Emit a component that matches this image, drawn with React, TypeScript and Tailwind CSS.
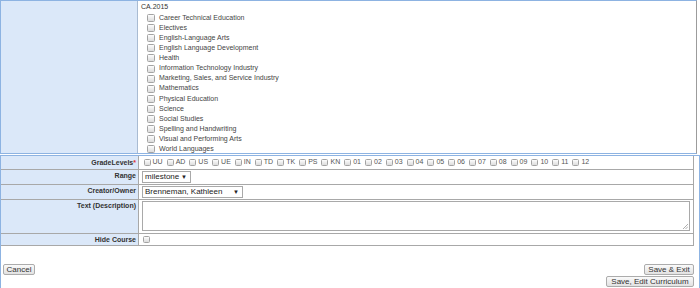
import React from "react";

const subjects = [
  "Career Technical Education",
  "Electives",
  "English-Language Arts",
  "English Language Development",
  "Health",
  "Information Technology Industry",
  "Marketing, Sales, and Service Industry",
  "Mathematics",
  "Physical Education",
  "Science",
  "Social Studies",
  "Spelling and Handwriting",
  "Visual and Performing Arts",
  "World Languages",
];

const grades = [
  "UU", "AD", "US", "UE", "IN", "TD", "TK", "PS", "KN",
  "01", "02", "03", "04", "05", "06", "07", "08", "09", "10", "11", "12",
];

function Check({ size = "w-[8px] h-[8px]" }: { size?: string }) {
  return (
    <span
      className={`inline-block shrink-0 ${size} rounded-[1.5px] border border-[#a3a3a3] bg-gradient-to-b from-[#fdfdfd] to-[#dcdcdc]`}
    />
  );
}

function Select({ value, width }: { value: string; width: string }) {
  return (
    <div
      className={`flex h-[12px] ${width} items-center justify-between border border-[#a9a9a9] bg-white pl-[2px] pr-[3px] text-[8px] leading-none text-[#222]`}
    >
      <span>{value}</span>
      <span className="text-[6px]">▼</span>
    </div>
  );
}

function Btn({ label, width }: { label: string; width: string }) {
  return (
    <div
      className={`flex h-[11px] ${width} items-center justify-center rounded-[2px] border border-[#acacac] bg-gradient-to-b from-[#fafafa] to-[#e2e2e2] text-[8px] leading-none text-[#333]`}
    >
      {label}
    </div>
  );
}

function Row({
  label,
  children,
  height,
  required,
  top,
}: {
  label: string;
  children: React.ReactNode;
  height: string;
  required?: boolean;
  top?: boolean;
}) {
  return (
    <div className={`flex ${height} border-b border-[#a8a8a8]`}>
      <div
        className={`flex w-[138px] shrink-0 justify-end border-r border-[#a8a8a8] bg-[#dbe8f9] pr-[2px] font-bold leading-[10px] text-[#333] ${
          top ? "items-start pt-[1px]" : "items-center"
        }`}
      >
        {label}
        {required && <span className="text-[#d33]">*</span>}
      </div>
      <div className="flex flex-1 items-start pl-[3px]">{children}</div>
    </div>
  );
}

export default function App() {
  return (
    <div className="h-[288px] w-[700px] overflow-hidden bg-white font-['Liberation_Sans',Arial,sans-serif] text-[7px] text-[#444]">
      {/* subject list */}
      <div className="flex h-[154px] w-[697px] border border-[#8db3e2] border-r-[#9c9c9c]">
        <div className="w-[137px] shrink-0 border-r border-[#a9bbd2] bg-[#dbe8f9]" />
        <div className="flex-1 pl-[3px] pt-[1px]">
          <div className="h-[11px] leading-[10px] text-[#333]">CA.2015</div>
          {subjects.map((s) => (
            <div key={s} className="flex h-[10.1px] items-center gap-[4px] pl-[6px]">
              <Check />
              <span>{s}</span>
            </div>
          ))}
        </div>
      </div>

      {/* course fields */}
      <div className="mt-[1px] h-[133px] w-[700px] border-x border-t border-[#8db3e2]">
        <div className="w-[693px] border-r border-[#a8a8a8]">
          <Row label="GradeLevels" height="h-[14px]" required>
            <div className="-ml-[1px] flex h-full items-center">
              {grades.map((g) => (
                <div key={g} className="ml-[2.5px] mr-[1.5px] flex items-center">
                  <Check size="w-[7px] h-[7px]" />
                  <span className="ml-[2px] text-[#555]">{g}</span>
                </div>
              ))}
            </div>
          </Row>
          <Row label="Range" height="h-[15px]" top>
            <div className="pt-[1px]">
              <Select value="milestone" width="w-[49px]" />
            </div>
          </Row>
          <Row label="Creator/Owner" height="h-[15px]" top>
            <div className="pt-[1px]">
              <Select value="Brenneman, Kathleen" width="w-[101px]" />
            </div>
          </Row>
          <Row label="Text (Description)" height="h-[34px]" top>
            <div className="pt-[1px]">
              <div className="relative h-[30px] w-[548px] border border-[#a9a9a9] bg-white">
                <svg
                  className="absolute bottom-[1px] right-[1px]"
                  width="5"
                  height="5"
                  viewBox="0 0 5 5"
                >
                  <path d="M5 0L0 5M5 2.5L2.5 5" stroke="#999" strokeWidth="0.8" />
                </svg>
              </div>
            </div>
          </Row>
          <Row label="Hide Course" height="h-[12px]">
            <div className="flex h-full items-center pl-[1px]">
              <Check size="w-[7px] h-[7px]" />
            </div>
          </Row>
        </div>

        <div className="mt-[18px] flex items-start justify-between pl-[2px] pr-[5px]">
          <Btn label="Cancel" width="w-[32px]" />
          <div className="flex flex-col items-end gap-[1px]">
            <Btn label="Save & Exit" width="w-[50px]" />
            <Btn label="Save, Edit Curriculum" width="w-[88px]" />
          </div>
        </div>
      </div>
    </div>
  );
}
